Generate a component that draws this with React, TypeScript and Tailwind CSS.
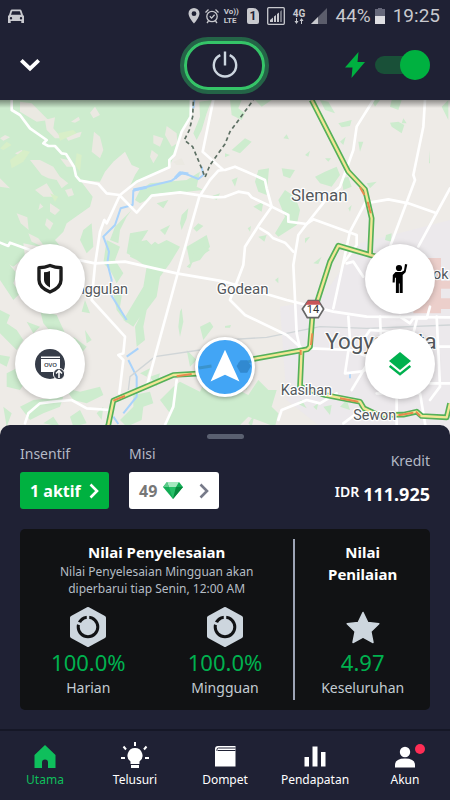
import { useState, type ReactNode } from "react";

const FONT = "font-['Noto_Sans',sans-serif]";

function StatusBar() {
  return (
    <div className="flex h-8 items-center justify-between pr-[10px] pl-2 font-['Roboto',sans-serif] text-[#c8c9ce]">
      <svg className="h-4 w-4" viewBox="0 0 16 16" fill="currentColor" aria-hidden="true">
        <path
          fillRule="evenodd"
          d="M3.500 1.500h9l1 1 1.500 4.500 1 1V15h-2.700v-2H2.700v2H0V8l1-1 1.500-4.500zM4.200 3.200 3 6.800h10l-1.200-3.600zM3 9a1.200 1.200 0 100 2.400A1.200 1.200 0 003 9zm10 0a1.200 1.200 0 100 2.400A1.200 1.200 0 0013 9z"
        />
      </svg>
      <div className="flex items-center gap-1">
        <svg className="h-4 w-3" viewBox="0 0 12 16" fill="currentColor" aria-hidden="true">
          <path fillRule="evenodd" d="M6 0a5.500 5.500 0 00-5.500 5.500C.5 9.500 6 15.500 6 15.500s5.500-6 5.500-10A5.500 5.500 0 006 0zm0 3.300a2.400 2.400 0 110 4.800 2.400 2.400 0 010-4.800z" />
        </svg>
        <svg className="h-4 w-4" viewBox="0 0 16 16" fill="none" stroke="currentColor" strokeWidth="1.300" aria-hidden="true">
          <circle cx="8" cy="8.500" r="5.200" />
          <path d="m5.800 8.300 1.800 1.800 3-3.300M1.500 4.500 4.500 1.500M14.500 4.500l-3-3M4.500 13 3 15M11.500 13l1.500 2" />
        </svg>
        <span className="flex flex-col text-[8px] leading-[9px] font-bold">
          <span>Vo))</span>
          <span>LTE</span>
        </span>
        <span className="ml-1 flex h-4 w-3 items-center justify-center rounded-xs rounded-tr-md bg-[#c8c9ce] text-xs font-bold text-[#1f2134]">1</span>
        <svg className="ml-1 h-[18px] w-[18px]" viewBox="0 0 18 18" fill="currentColor" aria-hidden="true">
          <rect x=".7" y=".7" width="16.600" height="16.600" rx="1" fill="none" stroke="currentColor" strokeWidth="1.300" />
          <path d="M3 15v-2l3-2.500V15zM7 15V9.500L9 8v7zM10 15V7l2-1.500V15z" />
          <path d="M13 15V4.500L15 3v12z" opacity=".5" />
        </svg>
        <span className="ml-1 flex flex-col items-center text-[10px] leading-[9px] font-bold">
          <span>4G</span>
          <svg className="h-[6px] w-[10px]" viewBox="0 0 10 6" fill="currentColor" aria-hidden="true">
            <path d="M2 0h1v3h1.500l-2 3-2-3H2zM7 6h1V3h1.500l-2-3-2 3H7z" />
          </svg>
        </span>
        <svg className="ml-[2px] h-4 w-4" viewBox="0 0 16 16" aria-hidden="true">
          <path d="M0 16 16 0v16z" fill="#5b5d6b" />
          <path d="M0 16 7 9v7z" fill="#c8c9ce" />
        </svg>
        <span className="ml-1 text-[19px] leading-6">44%</span>
        <span className="flex h-4 w-[10px] flex-col">
          <span className="mx-auto h-px w-1 bg-[#66687a]" />
          <span className="h-[7px] bg-[#66687a]" />
          <span className="h-2 bg-[#dedee2]" />
        </span>
        <span className="ml-1 text-[19px] leading-6">19:25</span>
      </div>
    </div>
  );
}

function Header() {
  const [auto, setAuto] = useState(true);
  return (
    <div className="grid h-[68px] grid-cols-3 items-center px-5 pb-[2px]">
      <button type="button" aria-label="Tutup" className="w-5 text-white">
        <svg className="h-5 w-5" viewBox="0 0 20 20" fill="none" stroke="currentColor" strokeWidth="3.800" aria-hidden="true">
          <path d="m1.300 5.300 8.700 8.400 8.700-8.400" />
        </svg>
      </button>
      <button
        type="button"
        aria-label="Daya"
        className="h-[57px] w-[89px] justify-self-center rounded-[28px] border-4 border-[#246447] text-[#cdd6e0]"
      >
        <span className="flex h-full items-center justify-center rounded-[24px] border-[3px] border-[#35c468]">
          <svg className="h-7 w-7" viewBox="0 0 28 28" fill="none" stroke="currentColor" strokeWidth="2.400" aria-hidden="true">
            <path d="M9.300 4.200a11.200 11.200 0 109.400 0M14 .5v14" />
          </svg>
        </span>
      </button>
      <div className="flex items-center justify-end gap-[10px]">
        <svg className="h-[26px] w-5" viewBox="0 0 20 26" fill="#00b140" aria-hidden="true">
          <path d="M13.500 0 0 15.500h7.500L6.500 26 20 10h-7.500z" />
        </svg>
        <label className="flex h-[30px] w-[55px] items-center">
          <input
            type="checkbox"
            aria-label="Terima otomatis"
            className="peer sr-only"
            checked={auto}
            onChange={(e) => setAuto(e.target.checked)}
          />
          <span className="h-[18px] flex-1 rounded-l-full bg-[#195038]" />
          <span className="-ml-2 h-[30px] w-[30px] rounded-full bg-[#00b140]" />
        </label>
      </div>
    </div>
  );
}

/* Map units are a third of a pixel at the base size. */
const hills =
  "M0 0H570L575 50 545 100 525 160 508 200 420 245 390 258 405 225 418 205 395 195 375 155 340 185 315 215 300 245 240 240 278 290 270 320 200 370 190 395 165 420 190 450 150 470 120 440 70 430 75 470 40 500 0 480Z";

const clearings =
  "M60 5 95 10 145 60 110 65 60 35ZM135 60 165 52 160 85 185 115 165 115 140 90ZM213 65 236 50 240 60 225 68ZM270 38 285 20 300 45 280 55ZM195 108 245 95 240 110 205 122ZM282 95 300 110 310 150 300 175 275 155ZM460 105 490 115 480 140 460 130ZM500 78 530 100 532 130 515 140 495 105ZM455 150 475 165 460 190 450 170ZM90 180 120 180 160 200 180 230 205 250 185 265 170 240 145 235 125 225ZM0 235 30 265 0 260ZM50 340 82 352 86 390 62 370ZM85 400 115 415 138 445 95 425ZM105 270 140 250 165 290 130 290ZM150 310 180 330 165 345 150 335ZM45 160 65 150 75 160 60 168ZM140 355 160 370 150 390 135 375ZM120 310 130 320 115 330ZM180 175 205 180 220 200 200 200ZM0 115 15 105 30 112 10 122ZM195 270 215 265 222 285 205 290ZM520 185 545 175 555 195 530 195Z";

const woodsNorth =
  "M598 5 635 0 620 40 605 90 590 120 580 100 600 50ZM450 250 500 245 560 240 600 215 590 260 610 270 560 275 480 280 420 310 405 300 420 270ZM545 345 565 325 560 355 545 390 540 370ZM580 385 595 370 610 378 590 395ZM470 310 505 300 490 325ZM480 390 510 375 495 405ZM395 330 380 350 360 390 355 430 330 420 345 380ZM390 400 445 390 420 430 400 470 380 460ZM430 455 465 425 485 440 500 470 460 495 440 480ZM560 440 620 405 630 440 600 480 570 490ZM250 390 275 370 280 440 260 460 240 420ZM630 290 660 280 650 300Z";

const woodsNorthEast =
  "M15 0 50 0 40 25 60 40 50 60 20 45ZM90 0 140 0 110 20ZM285 0 310 5 330 40 300 30ZM340 70 380 60 375 78 350 82ZM440 0 465 0 450 20ZM500 0 530 0 520 30 495 20ZM495 68 520 65 538 75 530 100 500 80ZM535 55 545 70 530 70ZM650 20 670 0V60ZM400 125 415 125 405 155ZM345 125 362 110 355 135ZM20 150 60 115 80 125 45 160ZM100 210 132 205 125 285 100 275 90 245ZM170 205 210 210 195 235 175 228ZM175 115 185 103 192 118ZM240 165 255 152 250 170ZM300 175 318 175 310 185ZM270 230 300 215 335 200 345 225 320 260 285 250ZM350 235 370 230 380 260 355 270ZM20 240 38 232 30 260ZM160 300 180 270 210 290 225 330 215 375 160 410 150 400 180 350ZM85 320 115 305 110 335ZM68 385 78 378 75 395ZM100 410 125 405 118 425ZM370 325 380 315 375 335ZM425 250 455 245 435 265ZM483 405 500 400 498 425 480 420ZM240 415 255 410 240 430ZM0 160 15 165 0 172ZM612 150 615 190 612 190Z";

const woodsSouth =
  "M0 40 50 100 40 130 60 160 40 180 0 120ZM0 210 30 225 20 250 50 270 70 300 50 330 0 280ZM80 245 120 260 100 280ZM320 0 360 20 345 60 370 100 350 130 330 90 310 70ZM395 10 440 0 460 20 500 0 540 20 510 70 480 110 470 170 440 210 430 260 435 300 410 320 405 260 420 230 400 260 370 240 400 190 430 140 440 80 410 60 390 50ZM340 160 370 140 360 200 380 250 350 210ZM540 215 545 205 550 245 540 290 535 260ZM575 45 610 20 630 30 580 65ZM560 80 580 60 570 85ZM600 260 630 245 640 260 610 300ZM120 210 170 225 200 290 160 285 130 250ZM255 180 270 220 245 215ZM220 290 260 320 240 345ZM255 270 275 300 260 310ZM100 480 190 470 180 500 130 520 90 540 60 500ZM20 400 50 385 80 420 60 450 20 440ZM195 445 240 455 300 440 310 465 260 490 220 480ZM520 440 540 425 600 455 620 410 675 450V600H480L510 520 480 480ZM400 465 450 455 460 490 430 500 425 540 380 560 360 540 400 500ZM210 530 240 510 260 550 220 560ZM10 500 35 520 20 560ZM130 550 160 530 180 560ZM560 330 590 360 570 380ZM0 345 30 350 20 380 0 370ZM290 520 310 500 305 540ZM420 400 450 385 440 410ZM450 410 480 400 470 440Z";

const woodsSouthEast =
  "M0 470 40 450 70 465 100 420 130 450 155 450 140 500 160 520 150 560 70 530 40 560 0 560ZM55 440 70 432 65 450ZM265 70 290 50 280 72ZM0 258 18 255 15 263H0ZM295 500 320 495 315 525ZM345 500 365 480 375 510ZM215 490 230 480 245 505ZM265 500 280 490 275 510ZM150 120 160 112 160 130ZM70 550 90 520 80 560Z";

const minorRoads = [
  "M35 0V30L60 45 90 85 140 120 130 130 145 138H165L185 160 198 162 222 200 228 228 240 242 295 252 320 280 358 285 390 318 410 338 455 287 540 277 640 292 675 291",
  "M573 0 572 50 545 95 523 165 508 180V202L410 245 360 285 330 350 320 370 313 360 300 395 285 495 275 600 375 710 370 760 355 765 370 780 358 880",
  "M640 0 608 155 670 210 655 212 630 240 598 290 540 495 440 860",
  "M675 210 705 200 740 215 795 240 800 265 815 320 780 370 735 440 730 495 690 600 735 645 860 705 905 745",
  "M675 290 715 275 745 280 755 292 815 320 865 345V365L920 372 985 290 1020 260 1060 150 1070 80 1120 0",
  "M1275 0 1270 80 1240 225 1245 240 1170 440",
  "M0 428 25 438 30 428 90 450 285 490 375 485 530 520 675 545 860 600 1000 635 1100 650 1350 652",
  "M1350 265 1255 440M1095 310 1165 298 1225 310 1310 340M1095 310 1050 395 1000 625",
  "M920 372 940 358 1070 405V435L1030 490",
  "M920 372 895 405 880 495 890 700 900 745",
  "M780 385 805 400 820 415 855 428 880 455",
  "M530 840 520 920 495 975M75 970 85 940 120 910 160 905 215 900 260 925 330 930",
  "M930 745 1050 750 1130 780M1045 650 1050 720 1035 820 1080 815 1130 800M1040 490 1060 485 1090 530",
  "M835 960 845 930 920 900 960 910 1010 880M1055 870 1085 820 1120 760M1200 650 1230 670 1240 655H1280L1290 620",
  "M1310 650 1320 860 1290 900M1320 740H1350M1290 850H1350",
  "M1070 940 1030 970M1190 870V990M1130 880H1260L1280 1000M1250 660 1240 700 1110 690 1090 720M1140 650 1145 760",
];

const trunkRoads =
  "M935 0 1045 215 1095 268 1115 355 1110 465M1130 470 1110 465 1015 437 990 485 945 625M937 650 930 740 922 748 765 776 605 820 520 825 340 902 325 975 305 1020M905 748 900 860 975 885 1080 905 1092 925 1135 945 1210 944 1250 935 1265 948 1340 952 1350 910";

function Label({ x, y, size, children }: { x: number; y: number; size: number; children: ReactNode }) {
  return (
    <text x={x} y={y} fontSize={size} textAnchor="middle" fill="#53585c" stroke="#fff" strokeWidth="7" strokeLinejoin="round" paintOrder="stroke">
      {children}
    </text>
  );
}

function MapCanvas() {
  return (
    <svg
      className="absolute inset-0 h-full w-full font-['Roboto',sans-serif]"
      viewBox="0 0 1350 1011"
      preserveAspectRatio="xMidYMid slice"
      role="img"
      aria-label="Peta Yogyakarta"
    >
      <rect width="1350" height="1011" fill="#eeebe7" />
      <path d="M1080 430 1350 360V1011H1000L860 900 840 620 960 600Z" fill="#ece9ec" />
      <g fill="#cdecce">
        <path d={hills} />
        <path d={woodsNorth} />
        <path d={woodsNorthEast} transform="translate(675 0)" />
        <path d={woodsSouth} transform="translate(0 420)" />
        <path d={woodsSouthEast} transform="translate(675 420)" />
      </g>
      <path d={clearings} fill="#ebe9e2" />
      <path
        d="M30 180 70 150 90 155 70 185 35 205ZM175 100 220 90 230 100 180 122ZM230 160 245 165 240 215 225 195ZM0 145 20 125 35 135 10 150ZM150 280 175 290 165 305Z"
        fill="#d8efc8"
      />
      <path d="M1215 474H1323V640H1240V580ZM1323 542H1350V566H1323ZM1290 595H1350V627H1290Z" fill="#eccfcb" />
      <g fill="none" stroke="#a9d3fb" strokeLinejoin="round">
        <path
          d="M583 0 580 25M605 200 610 225 595 237 548 218 525 235 515 242 450 258 400 272 398 315 362 325 345 375 310 410 327 455 322 490 335 540 330 580 380 660M380 770 415 745M385 780 410 830V890L370 940M340 950 355 972"
          strokeWidth="6"
        />
        <path d="M525 235 540 218 565 222M400 270 440 262" strokeWidth="9" />
        <path d="M1050 815V835" strokeWidth="5" />
      </g>
      <path d="M385 870 390 830 465 770 600 750 700 718 800 712 960 680 1100 685 1350 675" fill="none" stroke="#d0d5d7" strokeWidth="4" />
      <g fill="none" stroke="#fff" strokeWidth="8" strokeLinejoin="round" strokeLinecap="round">
        {minorRoads.map((d) => (
          <path key={d} d={d} />
        ))}
      </g>
      <path
        d="M580 5 578 50 568 90 553 120 578 140 605 205 615 232 630 195 675 132 690 95 760 0"
        fill="none"
        stroke="#5d6f63"
        strokeWidth="5"
        strokeDasharray="12 9"
      />
      <g fill="none" strokeLinejoin="round">
        <path d={trunkRoads} stroke="#55b159" strokeWidth="17" />
        <path d={trunkRoads} stroke="#f3e695" strokeWidth="7" />
        <path
          d="M1080 262 1093 285M1103 305 1112 340M937 700 933 735M340 902 375 888M530 829 575 822M1020 895 1075 905M1195 946 1240 938M1248 935 1260 948M902 750V765"
          stroke="#e8894f"
          strokeWidth="6"
        />
      </g>
      <path d="M925 602H955L971 627 955 653H922L907 627Z" fill="#fff" stroke="#666" strokeWidth="5" />
      <path d="M924 602H956L962 614H916Z" fill="#c95558" />
      <text x="939" y="639" fontSize="33" textAnchor="middle" fill="#333">14</text>
      <Label x={958} y={303} size={51}>Sleman</Label>
      <Label x={280} y={583} size={43}>Nanggulan</Label>
      <Label x={728} y={583} size={45}>Godean</Label>
      <Label x={1143} y={747} size={67}>Yogyakarta</Label>
      <Label x={919} y={885} size={43}>Kasihan</Label>
      <Label x={1124} y={959} size={43}>Sewon</Label>
      <Label x={1285} y={536} size={43}>Depok</Label>
    </svg>
  );
}

function RoundButton({ label, children }: { label: string; children: ReactNode }) {
  return (
    <button
      type="button"
      aria-label={label}
      className="flex h-[70px] w-[70px] items-center justify-center rounded-full bg-white shadow-[0_1px_6px_rgba(0,0,0,0.25)]"
    >
      {children}
    </button>
  );
}

function MapArea() {
  return (
    <main className="relative flex min-h-[337px] flex-1 items-end justify-between overflow-hidden px-[15px] pb-[38px]">
      <MapCanvas />
      <div className="absolute inset-x-0 top-0 h-2 bg-linear-to-b from-black/40 to-transparent" />
      <div className="relative flex flex-col gap-[15px]">
        <RoundButton label="Keamanan">
          <svg className="h-8 w-7" viewBox="0 0 28 32" aria-hidden="true">
            <path d="M14 2.500C10 4.200 6 4.700 3 4.700V17c0 6 5 9.500 11 12 6-2.500 11-6 11-12V4.700C22 4.700 18 4.200 14 2.500z" fill="#fff" stroke="#1c1c1c" strokeWidth="3.400" strokeLinejoin="round" />
            <path d="M14 8c-2 .8-4 1.200-6 1.200V17c0 3 2.500 5.500 6 7.500z" fill="#1c1c1c" />
          </svg>
        </RoundButton>
        <RoundButton label="Isi saldo OVO">
          <svg className="h-[30px] w-[30px] font-['Noto_Sans',sans-serif]" viewBox="0 0 30 30" aria-hidden="true">
            <circle cx="15" cy="15" r="15" fill="#363c48" />
            <path d="M6 7.500h19v1.500H6zM6 10h19V23H6z" fill="#fff" />
            <text x="15.500" y="18" fontSize="6" fontWeight="600" textAnchor="middle" fill="#363c48">OVO</text>
            <circle cx="24" cy="25" r="5.600" fill="#363c48" stroke="#fff" strokeWidth="1" />
            <path d="M24 29v-7M21 24.500l3-3 3 3" fill="none" stroke="#fff" strokeWidth="1.600" />
          </svg>
        </RoundButton>
      </div>
      <div className="relative mb-[2px] flex h-[60px] w-[60px] items-center justify-center rounded-full border-[3px] border-white bg-[#42a5f5] shadow-[0_1px_4px_rgba(0,0,0,0.35)]">
        <svg className="h-full w-full" viewBox="0 0 56 56" aria-hidden="true">
          <path d="M1 29 14 27M42 25 55 22" stroke="#3a93cc" strokeWidth="3" />
          <path d="M44 21h7l4 6-4 7h-7l-4-7z" fill="#3189d0" />
          <path d="M28 10 43 43 28 36 13 43z" fill="#fff" />
        </svg>
      </div>
      <div className="relative flex flex-col gap-[15px]">
        <RoundButton label="Bantuan">
          <svg className="h-[30px] w-4" viewBox="0 0 16 30" aria-hidden="true">
            <circle cx="7" cy="4" r="3.100" />
            <path d="M13 0 15.300.6 13.600 8.200 10.700 11V29H7.700V19.500H6.900V29H3.900V14L3 13.500 2.700 18.500H.6L.8 11 3.500 8h6L12 6.500z" />
          </svg>
        </RoundButton>
        <RoundButton label="Lapisan peta">
          <svg className="h-6 w-[22px]" viewBox="0 0 22 24" aria-hidden="true">
            <path d="M11 0 22 9 11 18 0 9z" fill="#00b14f" />
            <path d="m.7 14 10.300 8.300L21.300 14" fill="none" stroke="#00b14f" strokeWidth="2.400" />
          </svg>
        </RoundButton>
      </div>
    </main>
  );
}

function Chevron() {
  return (
    <svg className="h-4 w-[10px]" viewBox="0 0 10 16" fill="none" stroke="currentColor" strokeWidth="2.600" aria-hidden="true">
      <path d="m1.500 1.500 6.500 6.500-6.500 6.500" />
    </svg>
  );
}

function Score({ value, label }: { value: string; label: string }) {
  return (
    <>
      <span className="text-[22px] leading-[30px] text-[#00b14f]">{value}</span>
      <span className="text-sm leading-[22px] text-[#c3ccd2]">{label}</span>
    </>
  );
}

function Completion({ value, label }: { value: string; label: string }) {
  return (
    <div className="flex flex-col items-center">
      <svg className="h-10 w-[38px]" viewBox="0 0 38 40" aria-hidden="true">
        <path d="M19 2 35 10.800V29.200L19 38 3 29.200V10.800Z" fill="#cdd6de" stroke="#cdd6de" strokeWidth="4" strokeLinejoin="round" />
        <circle cx="19" cy="20" r="9.800" fill="none" stroke="#111214" strokeWidth="3" />
        <path d="M19 20V7M19 20 6 15" stroke="#cdd6de" strokeWidth="2.500" />
        <circle cx="19" cy="20" r="6.500" fill="#cdd6de" />
      </svg>
      <Score value={value} label={label} />
    </div>
  );
}

function Panel() {
  return (
    <section className="relative -mt-3 rounded-t-[10px] bg-[#1f2134] px-5 pt-[9px] pb-[19px]">
      <div className="mx-auto h-[5px] w-[37px] rounded-full bg-[#5a6070]" />
      <div className="flex h-[90px] items-start">
        <div className="flex w-[109px] flex-col gap-2 pt-[5px]">
          <span className="text-sm leading-5 text-[#b4b9c6]">Insentif</span>
          <button type="button" className="flex h-[37px] w-[89px] items-center justify-between rounded-[3px] bg-[#00b140] px-[10px] text-base font-bold text-white">
            1 aktif
            <Chevron />
          </button>
        </div>
        <div className="flex flex-col gap-2 pt-[5px]">
          <span className="text-sm leading-5 text-[#b4b9c6]">Misi</span>
          <button type="button" className="flex h-[37px] w-[90px] items-center rounded-[3px] bg-white px-[10px] text-base font-bold text-[#777]">
            49
            <svg className="ml-[6px] h-[17px] w-5" viewBox="0 0 20 17" aria-hidden="true">
              <path d="M4 0h12l4 5-10 12L0 5z" fill="#12ad55" />
              <path d="M4 0h12l-3 5H6z" fill="#a5e8bf" />
              <path d="M4 0 6 5H0z" fill="#5ccb8a" />
              <path d="M6 5h7l-3 12z" fill="#27bf68" />
              <path d="M13 5h7L10 17z" fill="#078a3e" />
            </svg>
            <span className="ml-auto text-[#777a89]"><Chevron /></span>
          </button>
        </div>
        <div className="ml-auto flex flex-col items-end pt-3">
          <span className="text-sm leading-5 text-[#b4b9c6]">Kredit</span>
          <span className="flex items-start gap-1 pt-2 font-semibold text-white">
            <span className="text-sm leading-[26px]">IDR</span>
            <span className="text-lg leading-[30px] font-bold">111.925</span>
          </span>
        </div>
      </div>
      <div className="grid h-[181px] grid-cols-3 rounded-[5px] bg-[#111214] py-[10px]">
        <div className="col-span-2 pt-[2px] text-center">
          <h2 className="text-[15px] leading-[22px] font-bold text-white">Nilai Penyelesaian</h2>
          <p className="text-xs leading-[17px] text-[#b5bdc4]">
            Nilai Penyelesaian Mingguan akan
            <br />
            diperbarui tiap Senin, 12:00 AM
          </p>
          <div className="grid grid-cols-2 pt-[10px]">
            <Completion value="100.0%" label="Harian" />
            <Completion value="100.0%" label="Mingguan" />
          </div>
        </div>
        <div className="flex flex-col items-center border-l-2 border-[#9da4b5] pt-[2px] text-center">
          <h2 className="text-[15px] leading-[22px] font-bold text-white">
            Nilai
            <br />
            Penilaian
          </h2>
          <svg className="mt-[22px] h-10 w-9" viewBox="0 0 36 40" aria-hidden="true">
            <path d="M18 5.500l4.800 10 11 1.200-8 7.700 2.200 11.100L18 30.200 8 35.500l2.200-11.100-8-7.700 11-1.200z" fill="#cdd6de" stroke="#cdd6de" strokeWidth="1.500" strokeLinejoin="round" />
          </svg>
          <Score value="4.97" label="Keseluruhan" />
        </div>
      </div>
    </section>
  );
}

function NavItem({ label, active, badge, children }: { label: string; active?: boolean; badge?: boolean; children: ReactNode }) {
  return (
    <a href="#" aria-current={active ? "page" : undefined} className={`flex flex-col items-center text-xs leading-[22px] ${active ? "text-[#0fbf5c]" : "text-white"}`}>
      <span className="relative">
        <svg className="h-[30px] w-[30px]" viewBox="0 0 30 30" fill="currentColor" aria-hidden="true">
          {children}
        </svg>
        {badge && <span className="absolute top-[5px] -right-[5px] h-[10px] w-[10px] rounded-full bg-[#ff2d55]" />}
      </span>
      {label}
    </a>
  );
}

function BottomNav() {
  return (
    <nav className="grid h-[71px] grid-cols-5 border-t-2 border-[#151726] bg-[#1f2134] pt-[8px]">
      <NavItem label="Utama" active>
        <path d="M15 6 25.500 16V29H18V23.500a3 3 0 00-6 0V29H4.500V16z" />
      </NavItem>
      <NavItem label="Telusuri">
        <path d="M15 9a7.500 7.500 0 00-4.500 13.500V25h9V22.500A7.500 7.500 0 0015 9zM11 26h8v3h-8z" />
        <path d="M15 3v4M3.500 7.500 6 10.500M26.500 7.500 24 10.500M1 19h4M25 19h4" stroke="currentColor" strokeWidth="2" />
      </NavItem>
      <NavItem label="Dompet">
        <path d="M8 7H25.500V27.500H5V10a3 3 0 013-3z" />
        <path d="M7 12V10.500A1.500 1.500 0 018.500 9H25.500M8 11.500H25.500" fill="none" stroke="#1f2134" strokeWidth="1" />
      </NavItem>
      <NavItem label="Pendapatan">
        <path d="M4.500 18H9v9.500H4.500zM12.500 7.500h5v20h-5zM21 13h4.500v14.500H21z" />
      </NavItem>
      <NavItem label="Akun" badge>
        <circle cx="15" cy="13" r="5.200" />
        <path d="M5 28.500V26q0-6.500 10-6.500T25 26v2.500z" />
      </NavItem>
    </nav>
  );
}

export default function App() {
  return (
    <div className={`flex min-h-screen flex-col bg-[#1f2134] ${FONT}`}>
      <header>
        <StatusBar />
        <Header />
      </header>
      <MapArea />
      <Panel />
      <BottomNav />
    </div>
  );
}
